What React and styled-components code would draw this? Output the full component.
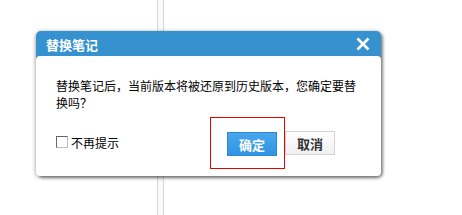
import React from "react"
import styled, { createGlobalStyle } from "styled-components"

const Global = createGlobalStyle`
  html, body {
    margin: 0;
    padding: 0;
    background: #ffffff;
  }
  body {
    font-family: "Noto Sans CJK SC", "Noto Sans", sans-serif;
  }
`

const Page = styled.div`
  position: relative;
  width: 462px;
  height: 215px;
  overflow: hidden;
  display: flex;
  padding-left: 157px;
  box-sizing: border-box;
`

// the note column behind the modal
const Column = styled.div`
  width: 5px;
  height: 100%;
  border-left: 1px solid #d9d6dd;
  border-right: 1px solid #d9d6dd;
  background: #faf9fb;
`

const Dialog = styled.div`
  position: absolute;
  left: 36px;
  top: 31px;
  width: 345px;
  height: 145px;
  background: #3592cf;
  border-radius: 5px;
  box-shadow: 0 1px 4px rgba(0, 0, 0, 0.45), 2px 2px 3px rgba(0, 0, 0, 0.35);
  display: flex;
  flex-direction: column;
`

const Header = styled.div`
  height: 25px;
  display: flex;
  align-items: center;
  justify-content: space-between;
  padding: 0 11px 0 10px;
`

const Title = styled.div`
  color: #ffffff;
  font-size: 13px;
  font-weight: 700;
  line-height: 25px;
  margin-top: 1px;
`

const Close = styled.button`
  border: 0;
  background: none;
  padding: 0;
  width: 14px;
  height: 14px;
  display: flex;
  cursor: pointer;
`

const Body = styled.div`
  flex: 1;
  background: #ffffff;
  border-radius: 4px;
  padding: 21px 20px 7px 20px;
  display: flex;
  flex-direction: column;
`

const Message = styled.p`
  margin: 0;
  font-size: 12px;
  line-height: 17px;
  color: #000;
`

const Footer = styled.div`
  margin-top: 6px;
  margin-right: 26px;
  display: flex;
  align-items: center;
`

const Check = styled.label`
  display: flex;
  align-items: center;
  gap: 3px;
  font-size: 12px;
  color: #000;
  margin-top: -2px;
`

const Box = styled.span`
  width: 10px;
  height: 10px;
  border: 1px solid #666;
  border-right-color: #bbb;
  border-bottom-color: #bbb;
  background: #fff;
`

const Highlight = styled.div`
  margin-left: auto;
  border: 1px solid #e60000;
  padding: 14px 7px 12px 16px;
  display: flex;
`

const Button = styled.button`
  width: 50px;
  height: 24px;
  padding: 0;
  font-family: inherit;
  font-size: 13px;
  font-weight: 700;
  border: 1px solid ${(p) => (p.primary ? "#2a8ad8" : "#d4d4d4")};
  color: ${(p) => (p.primary ? "#ffffff" : "#333333")};
  background: ${(p) =>
    p.primary
      ? "linear-gradient(#48a6ec, #3094e4)"
      : "linear-gradient(#ffffff, #f0f0f0)"};
  cursor: pointer;
`

export default function App() {
  return (
    <>
      <Global />
      <Page>
        <Column />
        <Dialog>
          <Header>
            <Title>替换笔记</Title>
            <Close>
              <svg width="14" height="14" viewBox="0 0 14 14">
                <path d="M1.5 1.5 L12.5 12.5 M12.5 1.5 L1.5 12.5" stroke="#fff" strokeWidth="2.6" />
              </svg>
            </Close>
          </Header>
          <Body>
            <Message>替换笔记后，当前版本将被还原到历史版本，您确定要替换吗？</Message>
            <Footer>
              <Check>
                <Box />
                不再提示
              </Check>
              <Highlight>
                <Button primary>确定</Button>
              </Highlight>
              <Button>取消</Button>
            </Footer>
          </Body>
        </Dialog>
      </Page>
    </>
  )
}
